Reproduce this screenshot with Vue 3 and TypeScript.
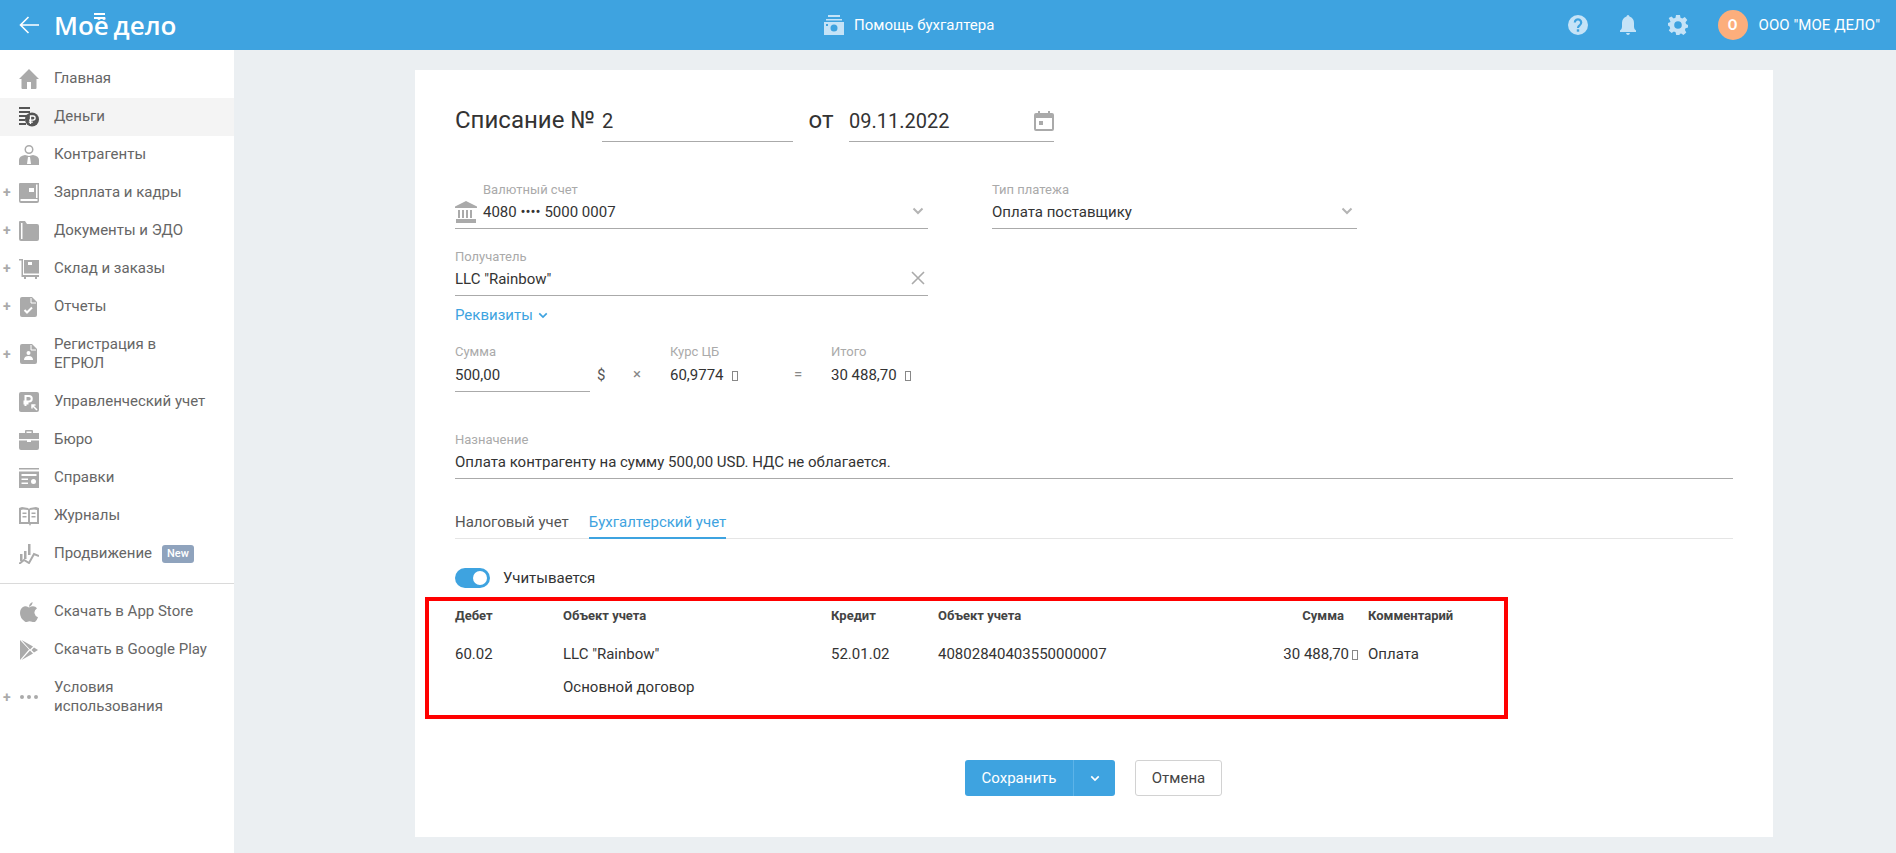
<script setup lang="ts">
interface Shape { d: string; fill?: string; stroke?: string; w?: number }
interface NavItem { label: string; plus?: boolean; active?: boolean; badge?: string; icon: Shape[] }

const G = '#aaaaaa'
const W = '#ffffff'

const mainNav: NavItem[] = [
  { label: 'Главная', icon: [{ d: 'M10 0 20 10h-2.5v9q0 1-1 1H12v-7H8v7H3.500q-1 0-1-1v-9H0z' }] },
  {
    label: 'Деньги',
    active: true,
    icon: [
      { d: 'M0 0h11v2H0zM0 4h11v2H0zM0 8h8v2H0zM0 12h6v2H0zM0 16h7v2H0z', fill: '#555555' },
      { d: 'M20 12.500a7 7 0 1 1-14 0 7 7 0 0 1 14 0z', fill: '#555555' },
      { d: 'M11.500 17V9h2.500a2 2 0 0 1 0 4.200h-4M9.800 15.200h4', fill: 'none', stroke: W, w: 1.3 }
    ]
  },
  {
    label: 'Контрагенты',
    icon: [
      { d: 'M10 0a4.500 4.500 0 1 1 0 9 4.500 4.500 0 0 1 0-9zm0 1.500a3 3 0 0 0 0 6 3 3 0 0 0 0-6z' },
      { d: 'M0 20v-5q0-4 6-5l4 1 4-1q6 1 6 5v5zM9 12l-1 7h4l-1-7z' }
    ]
  },
  {
    label: 'Зарплата и кадры',
    plus: true,
    icon: [{ d: 'M1 0h19v18q0 2-2 2H2q-2 0-2-2V1q0-1 1-1zM1.500 16v2h17v-2zM17 1.500V15h1.500V1.500zM10 5v4h5V5z' }]
  },
  {
    label: 'Документы и ЭДО',
    plus: true,
    icon: [{ d: 'M1 0h5l2 3h10q2 0 2 2v13q0 2-2 2H2q-2 0-2-2V1q0-1 1-1zM2 2v16h1.500V2z' }]
  },
  {
    label: 'Склад и заказы',
    plus: true,
    icon: [
      { d: 'M0 0h4v16h16v2h-2v2h-2v-2H7v2H5v-2H2.500V1.500H0z' },
      { d: 'M5 1h15v13.500H5zM9 3v3h4V3z' }
    ]
  },
  {
    label: 'Отчеты',
    plus: true,
    icon: [
      { d: 'M3 0h10l5 5v13q0 2-2 2H3q-2 0-2-2V2q0-2 2-2z' },
      { d: 'M5.500 13l2.500 2.500 5-5', fill: 'none', stroke: W, w: 2 },
      { d: 'M12 1v5h5', fill: 'none', stroke: W, w: 1 }
    ]
  },
  {
    label: 'Регистрация в ЕГРЮЛ',
    plus: true,
    icon: [
      { d: 'M3 0h10l5 5v13q0 2-2 2H3q-2 0-2-2V2q0-2 2-2z' },
      { d: 'M9.500 7a2 2 0 1 1 0 4 2 2 0 0 1 0-4zM5 16q0-4 4.500-4t4.500 4z', fill: W },
      { d: 'M12 1v5h5', fill: 'none', stroke: W, w: 1 }
    ]
  },
  {
    label: 'Управленческий учет',
    icon: [
      { d: 'M2 0h16q2 0 2 2v16q0 2-2 2H2q-2 0-2-2V2q0-2 2-2z' },
      { d: 'M6.500 14V4h3.500a2.500 2.500 0 0 1 0 5.500H4.500M4.500 11.500h5', fill: 'none', stroke: W, w: 2 },
      { d: 'M18 18l-5-5M13 16.500V13h3.500', fill: 'none', stroke: W, w: 1.500 }
    ]
  },
  {
    label: 'Бюро',
    icon: [{ d: 'M6 3V1q0-1 1-1h6q1 0 1 1v2h6v6H0V3zM7.500 1.500V3h5V1.500zM0 10.500h8V12h4v-1.500h8V18q0 2-2 2H2q-2 0-2-2z' }]
  },
  {
    label: 'Справки',
    icon: [{ d: 'M0 0h20v1.500H0zM0 3.500h20V20H0zM2.500 6v2h15V6zM2.500 10.500V12H9v-1.500zM2.500 14.500V16H9v-1.500zM14.500 11a2.500 2.500 0 1 0 0 5 2.500 2.500 0 0 0 0-5z' }]
  },
  {
    label: 'Журналы',
    icon: [{ d: 'M0 2l3-1 6 1 1 1 1-1 6-1 3 1v16h-8l-1 2-1-2H0zM2 4v12h7V4L4 3.500zM11 4v12h7V4l-3-.5zM3.500 6.500h4V8h-4zM3.500 10h4v1.500h-4zM12.500 6.500h4V8h-4zM12.500 10h4v1.500h-4z' }]
  },
  {
    label: 'Продвижение',
    badge: 'New',
    icon: [
      { d: 'M1 10h2.500v7H1zM5 7h2.500v8H5zM9 0h2.500v11H9z' },
      { d: 'M0 20l5-4 5 3 5-9 5 2', fill: 'none', stroke: G, w: 2 }
    ]
  }
]

const footerNav: NavItem[] = [
  {
    label: 'Скачать в App Store',
    icon: [{ d: 'M13.500 0q.3 3-3.500 5Q10 1.500 13.500 0zM10 5.500q2-1.300 4-1.300 2.500 0 4 2-3 2-2.500 5t3.500 4q-1 3-3 4.800-1 .6-3-.2-2.500-1-4.500 0-1.500.8-3-.5Q1 16 1 11q0-5 4-6.500 2-.6 5 1z' }]
  },
  {
    label: 'Скачать в Google Play',
    icon: [{ d: 'M1 0l9 9.500L1 20zM2.500 0 14 6.500l-3 3zM2.500 20 14 13.500l-3-3zM15 7.500l4 2.500-4 2.500-2.500-2.500z' }]
  },
  {
    label: 'Условия использования',
    plus: true,
    icon: [{ d: 'M3 8a2 2 0 1 1 0 4 2 2 0 0 1 0-4zM10 8a2 2 0 1 1 0 4 2 2 0 0 1 0-4zM17 8a2 2 0 1 1 0 4 2 2 0 0 1 0-4z' }]
  }
]
</script>

<template>
  <div class="page">
    <header class="topbar">
      <div class="brand">
        <svg class="back" viewBox="0 0 20 20" width="20" height="20">
          <path d="M20 10H1.500M9.500 2 1.500 10l8 8" fill="none" stroke="#fff" stroke-width="1.600" />
        </svg>
        <span class="logo">Моё дело</span>
      </div>
      <div class="helper">
        <svg viewBox="0 0 20 20" width="20" height="20" fill="#c5e3f7">
          <path d="M4 0h12v2H4zM2 4h16v1.500H2zM0 7h20v13H0zM10 9.500a3.500 3.500 0 1 0 0 7 3.500 3.500 0 0 0 0-7zM2 9v2h2V9z" fill-rule="evenodd" />
        </svg>
        <span>Помощь бухгалтера</span>
      </div>
      <div class="spacer"></div>
      <div class="top-actions">
        <svg class="top-icon" viewBox="0 0 20 20" width="20" height="20">
          <circle cx="10" cy="10" r="10" fill="#c5e3f7" />
          <path d="M6.800 7.500a3.200 3.200 0 1 1 5 2.700c-1.300.8-1.800 1.300-1.800 2.800" fill="none" stroke="#3ea3e0" stroke-width="2.200" />
          <rect x="8.800" y="14.300" width="2.400" height="2.400" fill="#3ea3e0" />
        </svg>
        <svg class="top-icon" viewBox="0 0 20 20" width="20" height="20" fill="#c5e3f7">
          <path d="M10 0q1.300 0 1.500 1.500Q16 3 16 8v4q0 2 2 3.500V17H2v-1.500Q4 14 4 12V8q0-5 4.500-6.500Q8.700 0 10 0zM8 18h4q-.5 2-2 2t-2-2z" />
        </svg>
        <svg class="top-icon" viewBox="0 0 20 20" width="20" height="20" fill="#c5e3f7">
          <path fill-rule="evenodd" d="M8 0h4l.5 2.800 1.800.8L16.800 2l2.500 3-1.800 2.200.5 1.800 2 1v2.500l-2.500.8-.6 1.800 1.400 2.400-2.800 2.500-2.300-1.600-1.700.7L11.800 20H8.200l-.6-2.800-1.700-.7-2.300 1.600L.8 15.600l1.400-2.400-.6-1.800L0 10.500V8l2.500-1-.6-1.800L.7 3l2.700-1.500 2.300 2 1.800-.8zM10 6.200a3.800 3.800 0 1 0 0 7.600 3.800 3.800 0 0 0 0-7.600z" />
        </svg>
        <span class="avatar">О</span>
        <span class="company">ООО "МОЕ ДЕЛО"</span>
      </div>
    </header>

    <div class="body">
      <aside class="sidebar">
        <nav class="nav">
          <a v-for="item in mainNav" :key="item.label" class="nav-row" :class="{ active: item.active }">
            <span class="plus">{{ item.plus ? '+' : '' }}</span>
            <svg class="nav-icon" viewBox="0 0 20 20" width="20" height="20">
              <path
                v-for="(s, i) in item.icon"
                :key="i"
                :d="s.d"
                :fill="s.fill || '#aaaaaa'"
                :stroke="s.stroke || 'none'"
                :stroke-width="s.w || 0"
                fill-rule="evenodd"
              />
            </svg>
            <span class="nav-label">{{ item.label }}</span>
            <span v-if="item.badge" class="badge">{{ item.badge }}</span>
          </a>
        </nav>
        <div class="nav-divider"></div>
        <nav class="nav nav-footer">
          <a v-for="item in footerNav" :key="item.label" class="nav-row">
            <span class="plus">{{ item.plus ? '+' : '' }}</span>
            <svg class="nav-icon" viewBox="0 0 20 20" width="20" height="20">
              <path v-for="(s, i) in item.icon" :key="i" :d="s.d" :fill="s.fill || '#aaaaaa'" fill-rule="evenodd" />
            </svg>
            <span class="nav-label">{{ item.label }}</span>
          </a>
        </nav>
      </aside>

      <main class="content">
        <section class="card">
          <div class="title-row">
            <h1 class="title">Списание №</h1>
            <div class="title-input num">2</div>
            <span class="title-from">от</span>
            <div class="title-input date">
              <span>09.11.2022</span>
              <svg viewBox="0 0 20 20" width="20" height="20">
                <path fill="#aaaaaa" fill-rule="evenodd" d="M4 0h2v2h8V0h2v2h2q2 0 2 2v14q0 2-2 2H2q-2 0-2-2V4q0-2 2-2h2zM2 7v11h16V7zM5 10h4v4H5z" />
              </svg>
            </div>
          </div>

          <div class="row-account">
            <div class="field account">
              <svg class="bank" viewBox="0 0 22 22" width="22" height="22">
                <path fill="#aaaaaa" d="M11 0l11 5.500v1.500H0V5.500zM3 9h2v8H3zM7 9h2v8H7zM11 9h2v8h-2zM15 9h2v8h-2zM1 18h20v4H1z" />
              </svg>
              <div class="field-body">
                <label class="flabel">Валютный счет</label>
                <div class="fvalue">4080 •••• 5000 0007</div>
              </div>
              <svg class="chev" viewBox="0 0 12 8" width="12" height="8">
                <path d="M1.500 1.500 6 6l4.500-4.500" fill="none" stroke="#b4b4b4" stroke-width="2" />
              </svg>
            </div>
            <div class="field paytype">
              <div class="field-body">
                <label class="flabel">Тип платежа</label>
                <div class="fvalue">Оплата поставщику</div>
              </div>
              <svg class="chev" viewBox="0 0 12 8" width="12" height="8">
                <path d="M1.500 1.500 6 6l4.500-4.500" fill="none" stroke="#b4b4b4" stroke-width="2" />
              </svg>
            </div>
          </div>

          <div class="field recipient">
            <div class="field-body">
              <label class="flabel">Получатель</label>
              <div class="fvalue">LLC "Rainbow"</div>
            </div>
            <svg class="clear" viewBox="0 0 14 14" width="14" height="14">
              <path d="M1 1l12 12M13 1 1 13" stroke="#aaaaaa" stroke-width="1.600" />
            </svg>
          </div>

          <a class="req-link">
            Реквизиты
            <svg viewBox="0 0 12 8" width="10" height="7">
              <path d="M1.500 1.500 6 6l4.500-4.500" fill="none" stroke="#3ea3e0" stroke-width="2" />
            </svg>
          </a>

          <div class="sum-row">
            <div class="field sum">
              <div class="field-body">
                <label class="flabel">Сумма</label>
                <div class="fvalue">500,00</div>
              </div>
            </div>
            <span class="cur">$</span>
            <span class="op times">×</span>
            <div class="plain rate">
              <label class="flabel">Курс ЦБ</label>
              <div class="fvalue">60,9774 <i class="tofu"></i></div>
            </div>
            <span class="op eq">=</span>
            <div class="plain total">
              <label class="flabel">Итого</label>
              <div class="fvalue">30 488,70 <i class="tofu"></i></div>
            </div>
          </div>

          <div class="field purpose">
            <div class="field-body">
              <label class="flabel">Назначение</label>
              <div class="fvalue">Оплата контрагенту на сумму 500,00 USD. НДС не облагается.</div>
            </div>
          </div>

          <div class="tabs">
            <span class="tab">Налоговый учет</span>
            <span class="tab tab-active">Бухгалтерский учет</span>
          </div>

          <div class="toggle-row">
            <span class="toggle"><span class="knob"></span></span>
            <span class="toggle-label">Учитывается</span>
          </div>

          <div class="table-wrap">
            <div class="grid head">
              <span>Дебет</span>
              <span>Объект учета</span>
              <span>Кредит</span>
              <span>Объект учета</span>
              <span class="amount amount-head">Сумма</span>
              <span class="comment">Комментарий</span>
            </div>
            <div class="grid data">
              <span>60.02</span>
              <span class="stack"><span>LLC "Rainbow"</span><span>Основной договор</span></span>
              <span>52.01.02</span>
              <span>40802840403550000007</span>
              <span class="amount">30 488,70<i class="tofu tofu-tight"></i></span>
              <span class="comment">Оплата</span>
            </div>
            <div class="annotation"></div>
          </div>

          <div class="actions">
            <div class="btn-save">
              <span class="save-main">Сохранить</span>
              <span class="save-arrow">
                <svg viewBox="0 0 12 8" width="10" height="7">
                  <path d="M1.500 1.500 6 6l4.500-4.500" fill="none" stroke="#fff" stroke-width="2" />
                </svg>
              </span>
            </div>
            <div class="btn-cancel">Отмена</div>
          </div>
        </section>
      </main>
    </div>
  </div>
</template>

<style>
html, body { margin: 0; background: #ebeff2; }
</style>

<style scoped>
.page {
  height: 853px;
  overflow: hidden;
  display: flex;
  flex-direction: column;
  font-family: Roboto, "Liberation Sans", sans-serif;
  font-size: 15px;
  color: #333;
  background: #ebeff2;
}
.topbar {
  height: 50px;
  flex: none;
  background: #3ea3e0;
  display: flex;
  align-items: center;
  color: #fff;
}
.brand {
  width: 824px;
  flex: none;
  display: flex;
  align-items: center;
  padding-left: 19px;
  box-sizing: border-box;
  gap: 15px;
}
.logo {
  position: relative;
  font-family: "Open Sans", sans-serif;
  font-size: 26px;
  font-weight: 600;
  line-height: 30px;
  word-spacing: -2px;
  white-space: nowrap;
}
.logo::after {
  content: "";
  position: absolute;
  left: 40px;
  top: 3px;
  width: 11px;
  height: 6px;
  background: linear-gradient(#fff 0 2px, #3ea3e0 2px 4px, #fff 4px 6px);
}
.helper { display: flex; align-items: center; gap: 10px; color: #fff; font-size: 15px; }
.spacer { flex: 1; }
.top-actions { display: flex; align-items: center; padding-right: 16px; }
.top-icon { margin-right: 30px; }
.avatar {
  width: 30px;
  height: 30px;
  border-radius: 50%;
  background: #fcae7c;
  display: flex;
  align-items: center;
  justify-content: center;
  font-weight: 700;
  font-size: 14px;
  margin-right: 11px;
}
.company { font-size: 15px; letter-spacing: 0.05px; white-space: nowrap; }

.body { flex: 1; display: flex; min-height: 0; }
.sidebar {
  width: 234px;
  flex: none;
  background: #fff;
}
.nav { padding-top: 10px; }
.nav-footer { padding-top: 9px; }
.nav-row {
  display: flex;
  align-items: center;
  padding: 9px 26px 10px 0;
  line-height: 19px;
  color: #666;
  font-size: 15px;
}
.nav-row.active { background: #f4f4f4; }
.plus {
  width: 19px;
  flex: none;
  box-sizing: border-box;
  padding-left: 3px;
  color: #aaa;
  font-size: 14px;
  font-weight: 700;
}
.nav-icon { flex: none; margin: -1px 15px -1px 0; }
.nav-label { min-width: 0; }
.badge {
  margin: 0 -26px 0 10px;
  background: #8fa3bd;
  color: #fff;
  font-size: 11px;
  font-weight: 500;
  line-height: 18px;
  padding: 0 5px;
  border-radius: 3px;
}
.nav-divider { height: 1px; background: #dadada; margin-top: 10px; }

.content { flex: 1; min-width: 0; padding: 20px 123px 0 181px; }
.card {
  background: #fff;
  height: 767px;
  box-sizing: border-box;
  padding: 0 40px;
  display: flow-root;
}
.title-row { display: flex; align-items: flex-end; height: 72px; }
.title { margin: 0; font-size: 24px; font-weight: 400; line-height: 34px; width: 147px; flex: none; padding-bottom: 5px; }
.title-input {
  height: 40px;
  box-sizing: border-box;
  border-bottom: 1px solid #aaa;
  padding-bottom: 2px;
  font-size: 20px;
  line-height: 36px;
  display: flex;
  justify-content: space-between;
  align-items: center;
}
.num { width: 191px; }
.title-from { font-size: 24px; width: 56px; flex: none; text-align: center; line-height: 34px; padding-bottom: 5px; }
.date { width: 205px; }
.field {
  display: flex;
  align-items: flex-end;
  border-bottom: 1px solid #aaa;
  box-sizing: border-box;
  position: relative;
}
.field-body { flex: 1; min-width: 0; }
.flabel { display: block; font-size: 13px; color: #aaa; line-height: 16px; margin-bottom: 3px; }
.fvalue { font-size: 15px; line-height: 22px; color: #333; padding-bottom: 5px; white-space: nowrap; }
.row-account { display: flex; margin-top: 40px; }
.account { width: 473px; height: 47px; }
.bank { margin: 0 6px 5px 0; flex: none; }
.chev { position: absolute; right: 4px; bottom: 13px; }
.paytype { width: 365px; height: 47px; margin-left: 64px; }
.recipient { width: 473px; height: 47px; margin-top: 20px; }
.clear { position: absolute; right: 3px; bottom: 10px; }
.req-link {
  display: inline-flex;
  align-items: center;
  gap: 5px;
  color: #3ea3e0;
  font-size: 15px;
  line-height: 20px;
  margin-top: 9px;
}
.sum-row { display: flex; align-items: flex-end; margin-top: 18px; }
.sum { width: 135px; height: 49px; }
.sum .flabel, .plain .flabel { margin-bottom: 4px; }
.cur { width: 35px; padding-left: 7px; box-sizing: border-box; font-size: 15px; color: #555; line-height: 22px; padding-bottom: 6px; }
.op { font-size: 15px; color: #888; line-height: 22px; padding-bottom: 7px; }
.times { width: 45px; padding-left: 8px; box-sizing: border-box; }
.plain { box-sizing: border-box; padding-bottom: 1px; }
.rate { width: 120px; }
.eq { width: 41px; padding-left: 4px; box-sizing: border-box; }
.tofu {
  display: inline-block;
  width: 6px;
  height: 10px;
  border: 1px solid #888;
  box-sizing: border-box;
  margin-left: 5px;
  vertical-align: -1px;
}
.tofu-tight { margin-left: 3px; }
.purpose { height: 48px; margin-top: 39px; }
.tabs { display: flex; gap: 20px; margin-top: 33px; border-bottom: 1px solid #e5e5e5; height: 27px; box-sizing: border-box; }
.tab { line-height: 20px; color: #555; }
.tab-active { color: #3ea3e0; border-bottom: 2px solid #3ea3e0; height: 27px; box-sizing: border-box; }
.toggle-row { display: flex; align-items: center; gap: 13px; margin-top: 29px; }
.toggle { width: 35px; height: 20px; border-radius: 10px; background: #3ea3e0; position: relative; flex: none; }
.knob { position: absolute; right: 3px; top: 3px; width: 14px; height: 14px; border-radius: 50%; background: #fff; }
.toggle-label { line-height: 20px; }
.table-wrap { position: relative; margin-top: 9px; }
.grid {
  display: grid;
  grid-template-columns: 108px 268px 107px 276px 144px 1fr;
}
.head { font-size: 13px; font-weight: 700; color: #444; line-height: 18px; padding-top: 10px; }
.data { line-height: 20px; padding-top: 19px; }
.amount { text-align: right; }
.amount-head { padding-right: 14px; }
.comment { padding-left: 10px; }
.stack { display: flex; flex-direction: column; gap: 13px; }
.annotation {
  position: absolute;
  left: -30px;
  top: 0;
  width: 1083px;
  height: 122px;
  border: 4px solid #ff0000;
  box-sizing: border-box;
  pointer-events: none;
}
.actions { display: flex; justify-content: flex-start; gap: 20px; margin-top: 63px; padding-left: 510px; }
.btn-save {
  display: flex;
  width: 150px;
  height: 36px;
  background: #3ea3e0;
  border-radius: 3px;
  color: #fff;
  line-height: 36px;
}
.save-main { width: 109px; text-align: center; border-right: 1px solid #5cb3e8; box-sizing: border-box; }
.save-arrow { flex: 1; display: flex; align-items: center; justify-content: center; }
.btn-cancel {
  width: 87px;
  height: 36px;
  box-sizing: border-box;
  border: 1px solid #d2d2d2;
  border-radius: 3px;
  text-align: center;
  line-height: 34px;
  color: #444;
}
</style>
